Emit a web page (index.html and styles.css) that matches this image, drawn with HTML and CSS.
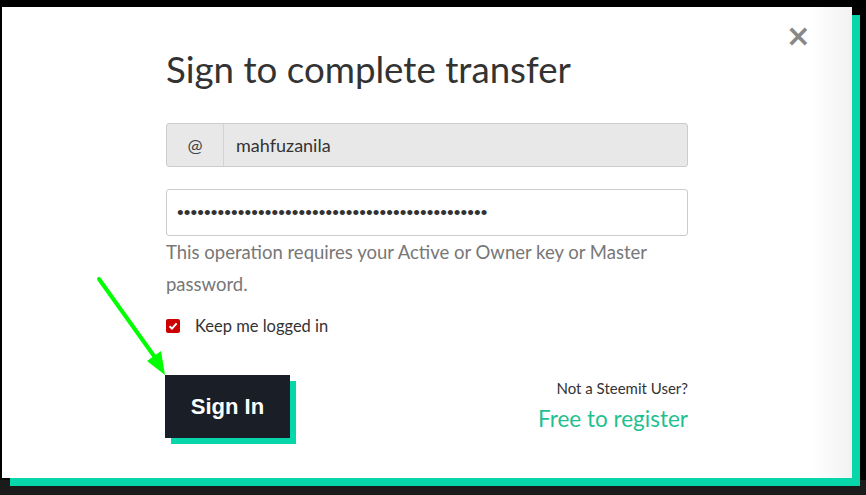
FILE: index.html
```html
<!DOCTYPE html>
<html lang="en">
<head>
    <meta charset="UTF-8">
    <title>Sign to complete transfer</title>
    <link rel="stylesheet" href="styles.css">
</head>
<body>
    <div class="modal">
        <button class="close" aria-label="Close">&times;</button>

        <svg class="arrow" width="80" height="110" viewBox="0 0 80 110">
            <line x1="3" y1="3" x2="63" y2="87" stroke="#00ff00" stroke-width="4" stroke-linecap="round"/>
            <polygon points="69,99 51,85 65,75" fill="#00ff00"/>
        </svg>

        <div class="content">
            <h1>Sign to complete transfer</h1>

            <div class="input-group">
                <span class="addon">@</span>
                <input class="username" type="text" value="mahfuzanila" readonly>
            </div>

            <input class="password" type="password" value="password1234567890password1234567890abcdefghij">

            <p class="help">This operation requires your Active or Owner key or Master password.</p>

            <label class="remember">
                <span class="check">
                    <svg width="10" height="10" viewBox="0 0 10 10"><path d="M1.5 5.2 L4 7.6 L8.6 2.4" fill="none" stroke="#fff" stroke-width="2"/></svg>
                </span>
                Keep me logged in
            </label>

            <div class="actions">
                <button class="signin">Sign In</button>
                <div class="register">
                    <p>Not a Steemit User?</p>
                    <a href="#">Free to register</a>
                </div>
            </div>
        </div>
    </div>
</body>
</html>
```

FILE: styles.css
```css
body {
    margin: 0;
    height: 495px;
    overflow: hidden;
    padding: 7px 0 0 2px;
    box-sizing: border-box;
    background: linear-gradient(#000 0, #000 480px, #1b1b1b 480px);
    font-family: Lato, "Open Sans", sans-serif;
}
.modal {
    position: relative;
    width: 850px;
    height: 471px;
    background: linear-gradient(to right, #fff 0, #fff 810px, #f2f2f2 850px);
    box-shadow: 8px 8px 0 #06d6a9;
}
.close {
    position: absolute;
    top: 14px;
    right: 41px;
    border: none;
    background: none;
    padding: 0;
    font-family: "DejaVu Sans", sans-serif;
    font-size: 30px;
    line-height: 30px;
    font-weight: bold;
    color: #888;
    cursor: pointer;
}
.arrow {
    position: absolute;
    left: 94px;
    top: 269px;
}
.content {
    width: 522px;
    padding: 37px 0 0 164px;
}
h1 {
    margin: 0 0 29px;
    font-size: 36.7px;
    line-height: 50px;
    font-weight: normal;
    color: #333;
}
.input-group {
    display: flex;
    height: 44px;
    border: 1px solid #ccc;
    border-radius: 3px;
    background: #e8e8e8;
    box-sizing: border-box;
}
.addon {
    width: 56px;
    border-right: 1px solid #d4d4d4;
    text-align: center;
    line-height: 42px;
    font-size: 18px;
    color: #444;
}
.username {
    flex: 1;
    border: none;
    background: none;
    padding: 0 12px;
    font-family: inherit;
    font-size: 18px;
    color: #333;
    outline: none;
}
.password {
    display: block;
    width: 100%;
    height: 47px;
    margin-top: 22px;
    border: 1px solid #ccc;
    border-radius: 3px;
    padding: 0 10px;
    box-sizing: border-box;
    font-size: 19px;
    letter-spacing: 0.1px;
    color: #333;
}
.help {
    margin: 0;
    font-size: 18.5px;
    line-height: 32px;
    color: #777;
}
.remember {
    display: flex;
    align-items: center;
    gap: 15px;
    margin-top: 16px;
    font-size: 16.5px;
    color: #333;
}
.check {
    display: flex;
    align-items: center;
    justify-content: center;
    width: 14px;
    height: 14px;
    border-radius: 2px;
    background: #cc0000;
}
.actions {
    display: flex;
    justify-content: space-between;
    align-items: flex-start;
    margin-top: 39px;
}
.signin {
    width: 125px;
    height: 63px;
    margin-left: -1px;
    border: none;
    background: #1a1f27;
    box-shadow: 6px 6px 0 #06d6a9;
    color: #fff;
    font-family: "Liberation Sans", Arial, sans-serif;
    font-weight: bold;
    font-size: 22px;
    cursor: pointer;
}
.register {
    text-align: right;
}
.register p {
    margin: 4px 0 0;
    font-size: 15px;
    color: #333;
}
.register a {
    display: block;
    margin-top: 8px;
    font-size: 22.5px;
    color: #1fbf8f;
    text-decoration: none;
}
```
